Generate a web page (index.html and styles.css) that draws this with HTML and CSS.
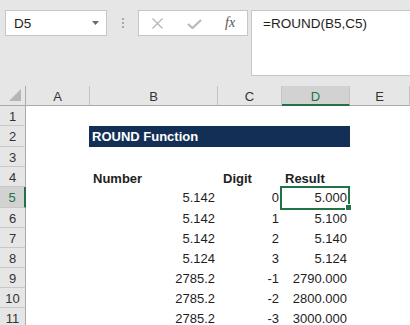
FILE: index.html
```html
<!DOCTYPE html>
<html lang="en">
<head>
    <meta charset="UTF-8">
    <title>ROUND Function</title>
    <link rel="stylesheet" href="styles.css">
</head>
<body>
    <div class="toolbar">
        <div class="name-box">
            <span>D5</span>
            <svg class="caret" width="7" height="4" viewBox="0 0 7 4"><path d="M0 0h7L3.5 4z" fill="#6b6b6b"/></svg>
        </div>
        <div class="grip"><i></i><i></i><i></i></div>
        <div class="fx-box">
            <svg class="icon-x" width="11" height="11" viewBox="0 0 11 11"><path d="M0.5 0.5l10 10M10.5 0.5l-10 10" stroke="#b4b4b4" stroke-width="1.2" fill="none"/></svg>
            <svg class="icon-ok" width="15" height="10" viewBox="0 0 15 10"><path d="M1 5l4.5 4L14 1" stroke="#b9b9b9" stroke-width="2.2" fill="none"/></svg>
            <span class="fx">fx</span>
        </div>
        <div class="formula">=ROUND(B5,C5)</div>
    </div>

    <div class="sheet">
        <div class="hd corner"></div>
        <div class="hd col">A</div>
        <div class="hd col">B</div>
        <div class="hd col">C</div>
        <div class="hd col sel">D</div>
        <div class="hd col">E</div>

        <div class="hd row">1</div>
        <div class="c"></div><div class="c"></div><div class="c"></div><div class="c"></div><div class="c"></div>

        <div class="hd row">2</div>
        <div class="c"></div>
        <div class="c title">ROUND Function</div>
        <div class="c"></div>

        <div class="hd row">3</div>
        <div class="c"></div><div class="c"></div><div class="c"></div><div class="c"></div><div class="c"></div>

        <div class="hd row">4</div>
        <div class="c"></div>
        <div class="c b">Number</div>
        <div class="c b digit">Digit</div>
        <div class="c b">Result</div>
        <div class="c"></div>

        <div class="hd row sel">5</div>
        <div class="c"></div>
        <div class="c n">5.142</div>
        <div class="c n">0</div>
        <div class="c n active">5.000</div>
        <div class="c"></div>

        <div class="hd row">6</div>
        <div class="c"></div>
        <div class="c n">5.142</div>
        <div class="c n">1</div>
        <div class="c n">5.100</div>
        <div class="c"></div>

        <div class="hd row">7</div>
        <div class="c"></div>
        <div class="c n">5.142</div>
        <div class="c n">2</div>
        <div class="c n">5.140</div>
        <div class="c"></div>

        <div class="hd row">8</div>
        <div class="c"></div>
        <div class="c n">5.124</div>
        <div class="c n">3</div>
        <div class="c n">5.124</div>
        <div class="c"></div>

        <div class="hd row">9</div>
        <div class="c"></div>
        <div class="c n">2785.2</div>
        <div class="c n">-1</div>
        <div class="c n">2790.000</div>
        <div class="c"></div>

        <div class="hd row">10</div>
        <div class="c"></div>
        <div class="c n">2785.2</div>
        <div class="c n">-2</div>
        <div class="c n">2800.000</div>
        <div class="c"></div>

        <div class="hd row">11</div>
        <div class="c"></div>
        <div class="c n">2785.2</div>
        <div class="c n">-3</div>
        <div class="c n">3000.000</div>
        <div class="c"></div>
    </div>
</body>
</html>
```

FILE: styles.css
```css
body {
    margin: 0;
    font-family: "Liberation Sans", Arial, sans-serif;
    font-size: 13px;
    color: #1e1e1e;
    background-color: #e6e6e6;
    overflow: hidden;
}
.toolbar {
    display: flex;
    align-items: flex-start;
    height: 86px;
    padding: 10px 0 0 5px;
    box-sizing: border-box;
}
.name-box {
    display: flex;
    align-items: center;
    justify-content: space-between;
    width: 102px;
    height: 26px;
    padding: 0 7px 0 8px;
    box-sizing: border-box;
    background: white;
    border: 1px solid #c6c6c6;
    font-size: 13.5px;
}
.grip {
    display: flex;
    flex-direction: column;
    gap: 2px;
    width: 2px;
    margin: 8px 14px 0 15px;
}
.grip i {
    display: block;
    width: 2px;
    height: 2px;
    background: #a8a8a8;
}
.fx-box {
    display: flex;
    align-items: center;
    width: 110px;
    height: 26px;
    box-sizing: border-box;
    background: white;
    border: 1px solid #c6c6c6;
}
.icon-x {
    margin-left: 13px;
}
.icon-ok {
    margin-left: 24px;
    margin-top: 2px;
}
.fx {
    margin-left: 23px;
    font-family: "Liberation Serif", serif;
    font-style: italic;
    font-size: 14px;
    color: #555;
}
.formula {
    flex: 1;
    height: 66px;
    margin-left: 3px;
    padding: 5px 0 0 11px;
    box-sizing: border-box;
    background: white;
    border: 1px solid #c6c6c6;
    border-right: none;
    font-size: 13.5px;
}
.sheet {
    display: grid;
    grid-template-columns: 26px 64px 128px 64px 68px 1fr;
    grid-template-rows: 20px 20px 21px 20px 20px 21px 20px 20px 20px 20px 20px 20px;
    background: white;
}
.hd {
    background: #e6e6e6;
    color: #333;
    box-sizing: border-box;
    display: flex;
    align-items: center;
    justify-content: center;
    padding-top: 1px;
}
.col {
    border-right: 1px solid #c4c4c4;
    border-bottom: 1px solid #ababab;
}
.col.sel {
    background: #d2d2d2;
    color: #217346;
    border-bottom: 2px solid #217346;
    padding-top: 2px;
}
.corner {
    position: relative;
    border-right: 1px solid #ababab;
    border-bottom: 1px solid #ababab;
}
.corner::after {
    content: "";
    position: absolute;
    right: 4px;
    bottom: 4px;
    border-left: 12px solid transparent;
    border-bottom: 12px solid #b6b6b6;
}
.row {
    border-right: 1px solid #ababab;
    border-bottom: 1px solid #c8c8c8;
}
.row.sel {
    background: #d2d2d2;
    color: #217346;
    border-right: 2px solid #217346;
}
.c {
    line-height: 20px;
    padding: 1px 3px 0;
    white-space: nowrap;
    box-sizing: border-box;
}
.n {
    text-align: right;
}
.b {
    font-weight: bold;
    padding-top: 2px;
}
.digit {
    padding-left: 5px;
}
.title {
    grid-column: 3 / 6;
    margin-left: -1px;
    background: #142f55;
    color: white;
    font-weight: bold;
    padding-top: 1px;
}
.active {
    position: relative;
}
.active::before {
    content: "";
    position: absolute;
    top: -1px;
    left: -2px;
    right: 0;
    bottom: -2px;
    border: 2px solid #217346;
}
.active::after {
    content: "";
    position: absolute;
    right: -2px;
    bottom: -3px;
    width: 5px;
    height: 5px;
    background: #217346;
    border: 1px solid white;
}
```
